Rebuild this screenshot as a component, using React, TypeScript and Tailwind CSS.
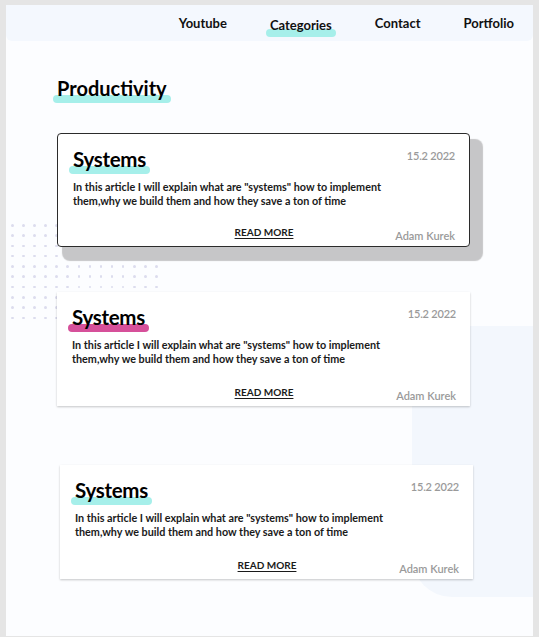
import React from "react";

const navItems = ["Youtube", "Categories", "Contact", "Portfolio"];

const Highlight: React.FC<{ color: string; children: React.ReactNode; className?: string }> = ({
  color,
  children,
  className = "",
}) => (
  <span className={`relative isolate inline-block ${className}`}>
    <span className={`absolute -left-[4px] -right-[4px] bottom-[-1px] h-[8px] rounded-full -z-10 ${color}`} />
    {children}
  </span>
);

const ArticleCard: React.FC<{ variant: "outlined" | "plain"; accent: string; className?: string }> = ({
  variant,
  accent,
  className = "",
}) => (
  <div
    className={`relative w-[413px] h-[114px] bg-white flex flex-col pl-[15px] pr-[14px] pt-[11px] pb-[3px] ${
      variant === "outlined"
        ? "border-[1.5px] border-[#2b2b2b] rounded-[4px] shadow-[9px_10px_1px_4px_#c6c6c8]"
        : "shadow-[0_1px_2px_rgba(0,0,0,0.22)]"
    } ${className}`}
  >
    <div className="flex justify-between items-start">
      <Highlight color={accent}>
        <h3 className="text-[20.5px] leading-[28px] font-bold text-black tracking-[-0.3px]">Systems</h3>
      </Highlight>
      <span className="text-[11px] leading-[16px] font-semibold text-[#9a9a9a] mt-[3px] tracking-[-0.2px]">
        15.2 2022
      </span>
    </div>
    <p className="mt-[7px] w-[320px] text-[10.8px] leading-[14px] font-bold text-[#1a1a1a]">
      In this article I will explain what are "systems" how to implement them,why we build them and how they save a ton
      of time
    </p>
    <div className="mt-auto grid grid-cols-[1fr_auto_1fr] items-end">
      <span />
      <a className="text-[10px] leading-[14px] font-bold underline underline-offset-2 text-[#1a1a1a] mb-[4px]">
        READ MORE
      </a>
      <span className="justify-self-end text-[11px] leading-[14px] font-semibold text-[#9a9a9a]">Adam Kurek</span>
    </div>
  </div>
);

export default function App() {
  return (
    <div
      className="h-screen bg-[#e5e5e5] pt-[5px] px-[6px] pb-[1px]"
      style={{ fontFamily: "Lato, 'Noto Sans', sans-serif" }}
    >
      <div className="relative h-full bg-[#fcfdff] overflow-hidden isolate">
        {/* decoration */}
        <div className="absolute left-[406px] top-[321px] right-0 h-[271px] bg-[#f3f7fd] rounded-bl-[40px] -z-10" />
        <div className="absolute left-[5px] top-[219px] grid grid-cols-[repeat(14,11.1px)] gap-y-[7.8px] -z-10">
          {Array.from({ length: 14 * 10 }).map((_, i) => (
            <span key={i} className="w-[2.5px] h-[2.5px] rounded-full bg-[#dcdcee]" />
          ))}
        </div>

        <nav className="h-[36px] bg-[#f4f8fe] rounded-b-[6px] flex items-center justify-end gap-[43px] pr-[19px] pt-[2px]">
          {navItems.map((item) =>
            item === "Categories" ? (
              <Highlight key={item} color="bg-[#a6efea]">
                <span className="text-[13px] font-bold text-[#111]">{item}</span>
              </Highlight>
            ) : (
              <span key={item} className="text-[13px] font-bold text-[#111]">
                {item}
              </span>
            )
          )}
        </nav>

        <main className="pl-[51px]">
          <div className="mt-[33px]">
            <Highlight color="bg-[#a6efea]">
              <h1 className="text-[20px] leading-[28px] font-bold text-black">Productivity</h1>
            </Highlight>
          </div>

          <div className="flex flex-col">
            <ArticleCard variant="outlined" accent="bg-[#a6efea]" className="mt-[31px]" />
            <ArticleCard variant="plain" accent="bg-[#d6509a]" className="mt-[45px]" />
            <ArticleCard variant="plain" accent="bg-[#a6efea]" className="mt-[59px] ml-[3px] w-[412px]" />
          </div>
        </main>
      </div>
    </div>
  );
}
